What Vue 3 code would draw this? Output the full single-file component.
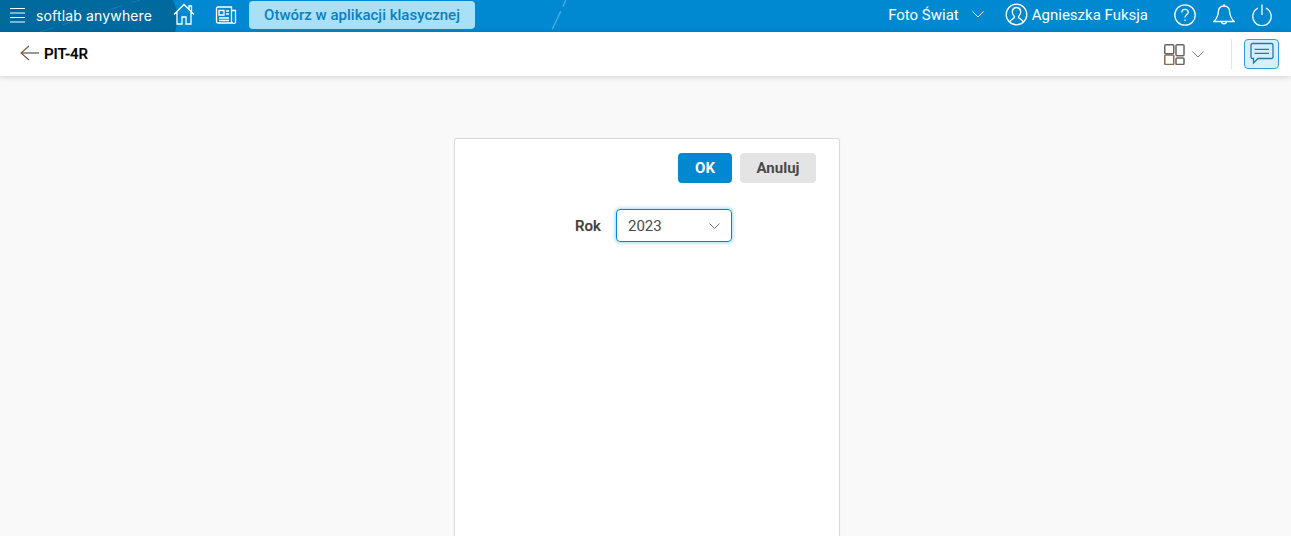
<script setup>
const title = 'PIT-4R'
</script>

<template>
  <div class="page">
    <header class="topbar">
      <svg class="decor" width="600" height="32" viewBox="0 0 600 32" aria-hidden="true">
        <defs>
          <linearGradient id="fade" x1="0" x2="1" y1="0" y2="0">
            <stop offset="0" stop-color="#0079bd" />
            <stop offset="0.55" stop-color="#0088d1" />
          </linearGradient>
        </defs>
        <rect x="0" y="0" width="330" height="32" fill="url(#fade)" />
        <path d="M0 0H173L179 16L175 32H0Z" fill="#006a9f" />
        <path d="M40 32L140 0" stroke="#1a7caf" stroke-width="1" stroke-dasharray="14 10" fill="none" />
        <path d="M551 32L566 0" stroke="#42aae0" stroke-width="1.5" stroke-dasharray="20 5 13 30" stroke-dashoffset="-3" fill="none" />
      </svg>
      <div class="top-left">
        <svg class="burger" width="15" height="15" viewBox="0 0 15 15">
          <path d="M0 0.500H15M0 5H15M0 9.500H15M0 14H15" stroke="#fff" stroke-width="1.200" fill="none" />
        </svg>
        <span class="brand">softlab anywhere</span>
        <svg class="home" width="22" height="22" viewBox="0 0 22 22" fill="none" stroke="#fff" stroke-width="1.300">
          <path d="M1 11.500L11 1.500L21 11.500M16 6.500V3H18.500V9.500M4 9V21H9V14H13V21H18V9" />
        </svg>
        <svg class="news" width="22" height="18" viewBox="0 0 22 18" fill="none" stroke="#fff" stroke-width="1.300">
          <path d="M1.500 2.500A1.500 1.500 0 0 1 3 1H16.500V15.500A1.500 1.500 0 0 0 18 17H3A1.500 1.500 0 0 1 1.500 15.500Z" />
          <path d="M16.500 4.500H20.500V15.500A1.500 1.500 0 0 1 18 17" />
          <path d="M4 4.500H9V9H4ZM11 5H14M11 8H14M4 12H14M4 14.500H14" />
        </svg>
        <button class="open-btn">Otwórz w aplikacji klasycznej</button>
      </div>
      <div class="top-right">
        <span class="company">Foto Świat</span>
        <svg class="company-chev" width="12" height="7" viewBox="0 0 12 7" fill="none" stroke="#fff" stroke-width="1">
          <path d="M0.500 0.500L6 6L11.500 0.500" />
        </svg>
        <svg class="user-icon" width="23" height="23" viewBox="0 0 23 23" fill="none" stroke="#fff" stroke-width="1.300">
          <circle cx="11.500" cy="11.500" r="10.300" />
          <path d="M4.500 19.500C5 16.500 8 16 9 15C9.500 14.500 9.500 13.500 9 13C7.500 11.500 7 9.500 7.500 7.500C8 5.500 9.500 4.500 11.500 4.500C13.500 4.500 15 5.500 15.500 7.500C16 9.500 15.500 11.500 14 13C13.500 13.500 13.500 14.500 14 15C15 16 18 16.500 18.500 19.500" />
        </svg>
        <span class="user-name">Agnieszka Fuksja</span>
        <svg class="help" width="22" height="22" viewBox="0 0 22 22" fill="none" stroke="#fff" stroke-width="1.300">
          <circle cx="11" cy="11" r="10.200" />
          <path d="M7.800 8.500C7.800 6.500 9.200 5.300 11 5.300C12.900 5.300 14.200 6.500 14.200 8.200C14.200 10.500 11 10.800 11 13.500" />
          <path d="M11 15.500V17" />
        </svg>
        <svg class="bell" width="22" height="23" viewBox="0 0 22 23" fill="none" stroke="#fff" stroke-width="1.300">
          <path d="M11 1V3M11 3C7.500 3 5.500 5.500 5.300 9C5 13.500 3.500 16 0.800 18.500H21.200C18.500 16 17 13.500 16.700 9C16.500 5.500 14.500 3 11 3Z" />
          <path d="M8.500 18.500C8.500 21.500 13.500 21.500 13.500 18.500" />
        </svg>
        <svg class="power" width="20" height="22" viewBox="0 0 20 22" fill="none" stroke="#fff" stroke-width="1.300">
          <path d="M6 4.200A9.200 9.200 0 1 0 14 4.200M10 0.500V11" />
        </svg>
      </div>
    </header>

    <div class="subbar">
      <div class="sub-left">
        <svg class="back" width="20" height="16" viewBox="0 0 20 16" fill="none" stroke-width="1.100">
          <path d="M19 8H1.500" stroke="#444" />
          <path d="M9 1L1 8L9 15" stroke="#7a4f3a" />
        </svg>
        <span class="title">{{ title }}</span>
      </div>
      <div class="sub-right">
        <svg class="layout" width="22" height="21" viewBox="0 0 22 21" fill="none" stroke-width="1.500">
          <rect x="1.750" y="0.750" width="9" height="9" rx="1" stroke="#666" />
          <rect x="1.750" y="11" width="9" height="9.500" rx="1" stroke="#8d6a52" />
          <rect x="13" y="0.750" width="8" height="11" rx="1" stroke="#666" />
          <rect x="13" y="14" width="8" height="6.500" rx="1" stroke="#666" />
        </svg>
        <svg class="layout-chev" width="12" height="7" viewBox="0 0 12 7" fill="none" stroke="#777" stroke-width="1">
          <path d="M0.500 0.500L6 6L11.500 0.500" />
        </svg>
        <span class="divider"></span>
        <button class="chat-btn" aria-label="chat">
          <svg width="24" height="24" viewBox="0 0 24 24" fill="none" stroke="#1c7cae" stroke-width="1.300">
            <path d="M2.500 1.500H21.500A1.500 1.500 0 0 1 23 3V15A1.500 1.500 0 0 1 21.500 16.500H8L3.500 21V16.500H2.500A1.500 1.500 0 0 1 1 15V3A1.500 1.500 0 0 1 2.500 1.500Z" />
            <path d="M4.500 7.300H19M4.500 11.300H19" />
          </svg>
        </button>
      </div>
    </div>

    <main class="content">
      <section class="card">
        <div class="actions">
          <button class="btn ok">OK</button>
          <button class="btn cancel">Anuluj</button>
        </div>
        <div class="field">
          <label class="field-label">Rok</label>
          <div class="select">
            <span>2023</span>
            <svg width="11" height="6" viewBox="0 0 11 6" fill="none" stroke="#777" stroke-width="1">
              <path d="M0.500 0.500L5.500 5.500L10.500 0.500" />
            </svg>
          </div>
        </div>
      </section>
    </main>
  </div>
</template>

<style>
html, body { margin: 0; height: 100%; overflow: hidden; }
#app { height: 100%; }
</style>

<style scoped>
.page {
  height: 536px;
  display: flex;
  flex-direction: column;
  background: #f9f9f9;
  font-family: Roboto, "Liberation Sans", sans-serif;
  overflow: hidden;
}
.topbar {
  position: relative;
  height: 32px;
  flex: none;
  background: #0088d1;
  display: flex;
  justify-content: space-between;
  align-items: center;
  color: #fff;
}
.decor { position: absolute; left: 0; top: 0; }
.top-left, .top-right { position: relative; display: flex; align-items: center; }
.top-right { margin-bottom: 3px; }
.burger { margin-left: 10px; margin-bottom: 2px; }
.brand {
  margin-left: 11px;
  font-family: Inter, sans-serif;
  font-size: 14px;
  letter-spacing: 0.15px;
  width: 127px;
  white-space: nowrap;
  margin-bottom: 2px;
}
.home { margin-left: 9.500px; margin-bottom: 4px; }
.news { margin-left: 20px; margin-bottom: 3px; }
.open-btn {
  margin-left: 12.500px;
  margin-bottom: 2px;
  height: 28px;
  width: 226px;
  border: none;
  border-radius: 4px;
  background: #a8e0f8;
  color: #0a7fc1;
  font: 500 15px Roboto, sans-serif;
  padding: 0;
}
.company { font-size: 15px; }
.company-chev { margin-left: 13px; }
.user-icon { margin-left: 21px; }
.user-name { margin-left: 4px; font-size: 15px; }
.help { margin-left: 26px; }
.bell { margin-left: 17px; }
.power { margin-left: 17px; margin-right: 19px; }
.subbar {
  position: relative;
  height: 44px;
  flex: none;
  background: #fff;
  box-shadow: 0 1px 6px rgba(0, 0, 0, 0.16);
  display: flex;
  justify-content: space-between;
  align-items: center;
}
.sub-left { display: flex; align-items: center; margin-left: 20px; }
.back { margin-bottom: 3px; }
.title { margin-left: 4px; font-size: 15px; font-weight: 500; color: #000; -webkit-text-stroke: 0.2px #000; }
.sub-right { display: flex; align-items: center; margin-right: 12px; }
.layout-chev { margin-left: 7px; }
.divider { width: 1px; height: 30px; background: #e4e4e4; margin-left: 27px; }
.chat-btn {
  margin-left: 12px;
  width: 35px;
  height: 30px;
  padding: 0;
  border: 1px solid #2a9fdb;
  border-radius: 4px;
  background: #d6effb;
  display: flex;
  align-items: center;
  justify-content: center;
}
.content { flex: 1; display: flex; justify-content: center; padding-top: 62px; min-height: 0; padding-left: 3px; }
.card {
  box-sizing: border-box;
  width: 386px;
  height: 440px;
  background: #fff;
  border: 1px solid #d9d9d9;
  border-radius: 3px;
  box-shadow: 0 0 2px rgba(0, 0, 0, 0.06);
}
.actions { display: flex; justify-content: flex-end; gap: 8px; padding: 14px 23px 0 0; }
.btn {
  height: 30px;
  border: none;
  border-radius: 4px;
  font: 700 15px Roboto, sans-serif;
  padding: 0;
}
.ok { width: 54px; background: #0088d1; color: #fff; }
.cancel { width: 76px; background: #e4e4e4; color: #4a4a4a; }
.field { display: flex; align-items: center; margin-top: 26px; padding-left: 120px; }
.field-label { font-size: 15px; font-weight: 500; color: #3d3d3d; width: 41px; -webkit-text-stroke: 0.2px #3d3d3d; }
.select {
  box-sizing: border-box;
  width: 116px;
  height: 33px;
  border: 1px solid #0088d1;
  border-radius: 4px;
  box-shadow: 0 0 4px rgba(0, 136, 209, 0.55);
  display: flex;
  align-items: center;
  justify-content: space-between;
  padding: 0 11px 0 11px;
  font-size: 15px;
  color: #4a4a4a;
}
</style>
